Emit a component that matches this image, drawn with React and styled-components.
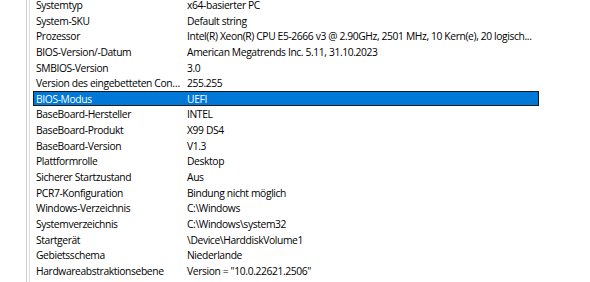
import React from "react";
import styled, { createGlobalStyle } from "styled-components";

const Global = createGlobalStyle`
  html, body { margin: 0; padding: 0; background: #ffffff; }
  body { font-family: "Open Sans", "Noto Sans", sans-serif; }
`;

const Window = styled.div`
  width: 590px;
  height: 282px;
  overflow: hidden;
  background: #ffffff;
  display: flex;
`;

const Gutter = styled.div`
  width: 26px;
  flex: none;
`;

const Splitter = styled.div`
  width: 2px;
  flex: none;
  border-left: 1px solid #cfcfcf;
  border-right: 1px solid #dcdcdc;
`;

const ListView = styled.div`
  flex: 1;
  padding-left: 3px;
  margin-top: -3px;
  display: flex;
  flex-direction: column;
`;

const Row = styled.div`
  box-sizing: border-box;
  width: 506px;
  height: 15.65px;
  flex: none;
  display: grid;
  grid-template-columns: 153px 1fr;
  align-items: center;
  border: 1px solid ${(p) => (p.$selected ? "#1a1a1a" : "transparent")};
  background: ${(p) => (p.$selected ? "#0078d7" : "transparent")};
  color: ${(p) => (p.$selected ? "#ffffff" : "#000000")};
  font-size: 10.3px;
  letter-spacing: -0.38px;
  line-height: 13px;
  padding-top: 1px;
  white-space: nowrap;
`;

const Label = styled.span`
  overflow: hidden;
  text-overflow: ellipsis;
  padding-left: 2px;
  padding-right: 4px;
`;

const Value = styled.span`
  overflow: visible;
`;

const rows = [
  ["Systemtyp", "x64-basierter PC"],
  ["System-SKU", "Default string"],
  ["Prozessor", "Intel(R) Xeon(R) CPU E5-2666 v3 @ 2.90GHz, 2501 MHz, 10 Kern(e), 20 logisch..."],
  ["BIOS-Version/-Datum", "American Megatrends Inc. 5.11, 31.10.2023"],
  ["SMBIOS-Version", "3.0"],
  ["Version des eingebetteten Controllers", "255.255"],
  ["BIOS-Modus", "UEFI"],
  ["BaseBoard-Hersteller", "INTEL"],
  ["BaseBoard-Produkt", "X99 DS4"],
  ["BaseBoard-Version", "V1.3"],
  ["Plattformrolle", "Desktop"],
  ["Sicherer Startzustand", "Aus"],
  ["PCR7-Konfiguration", "Bindung nicht möglich"],
  ["Windows-Verzeichnis", "C:\\Windows"],
  ["Systemverzeichnis", "C:\\Windows\\system32"],
  ["Startgerät", "\\Device\\HarddiskVolume1"],
  ["Gebietsschema", "Niederlande"],
  ["Hardwareabstraktionsebene", 'Version = "10.0.22621.2506"'],
];

export default function App() {
  return (
    <Window>
      <Global />
      <Gutter />
      <Splitter />
      <ListView>
        {rows.map(([label, value]) => (
          <Row key={label} $selected={label === "BIOS-Modus"}>
            <Label>{label}</Label>
            <Value>{value}</Value>
          </Row>
        ))}
      </ListView>
    </Window>
  );
}
